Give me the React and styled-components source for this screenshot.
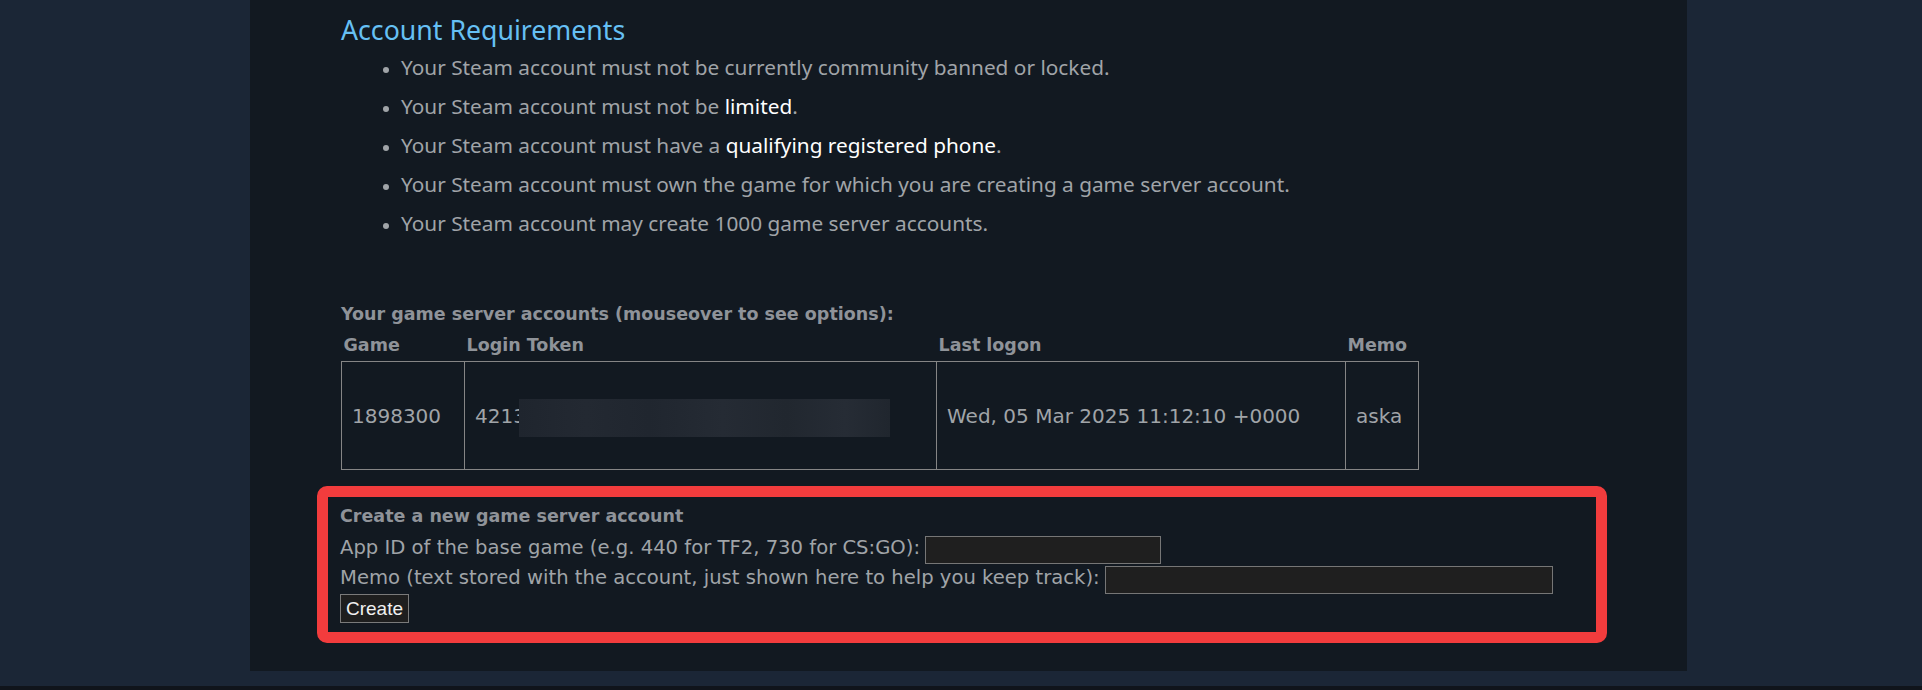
import React from "react";
import styled, { createGlobalStyle } from "styled-components";

const Global = createGlobalStyle`
  html, body { margin: 0; padding: 0; }
  body {
    background: #1b2636;
    font-family: "Noto Sans", "Open Sans", sans-serif;
    overflow: hidden;
  }
`;

const Page = styled.div`
  display: flex;
  flex-direction: column;
  height: 690px;
`;

const Panel = styled.main`
  margin-left: 250px;
  width: 1437px;
  box-sizing: border-box;
  background: #121921;
  padding: 12px 0 28px 91px;
`;

const Heading = styled.h2`
  margin: 0;
  font-size: 26.7px;
  line-height: 36px;
  font-weight: 400;
  color: #66c0f4;
`;

const Requirements = styled.ul`
  margin: 0;
  padding: 0 0 0 60px;
  list-style: disc;
  color: #a0a4a8;
  font-size: 20.8px;
  line-height: 39px;
  li::marker { font-size: 16px; }
`;

const Highlight = styled.span`
  color: #ffffff;
`;

const boldText = `
  font-family: "DejaVu Sans", Verdana, sans-serif;
  font-size: 17.5px;
  font-weight: 700;
  color: #8f9399;
`;

const SectionTitle = styled.div`
  ${boldText}
  margin-top: 56px;
  line-height: 30px;
`;

const Table = styled.table`
  border-collapse: collapse;
  table-layout: fixed;
  width: 1077px;
`;

const Th = styled.th`
  ${boldText}
  text-align: left;
  height: 32px;
  line-height: 30px;
  padding: 0 2px;
  vertical-align: middle;
`;

const Td = styled.td`
  border: 1px solid #858585;
  height: 107px;
  padding: 0 10px;
  font-family: "DejaVu Sans", Verdana, sans-serif;
  font-size: 20px;
  color: #a0a4a8;
  vertical-align: middle;
  white-space: nowrap;
`;

const Token = styled.span`
  display: inline-flex;
  align-items: center;
`;

const Redaction = styled.span`
  display: inline-block;
  width: 371px;
  height: 38px;
  margin-left: -7px;
  margin-top: 4px;
  background: linear-gradient(
    90deg,
    #1f252e 0%,
    #232932 18%,
    #20262f 35%,
    #252b34 55%,
    #21272f 72%,
    #262c35 88%,
    #20262e 100%
  );
`;

const CreateBox = styled.form`
  margin: 16px 0 0 -24px;
  width: 1290px;
  box-sizing: border-box;
  border: 11px solid #f23c3d;
  border-radius: 10px;
  padding: 5px 12px 9px 12px;
  color: #a0a4a8;
  font-family: "DejaVu Sans", Verdana, sans-serif;
  font-size: 19.6px;
`;

const FormTitle = styled.div`
  ${boldText}
  line-height: 28px;
  margin-bottom: 6px;
`;

const FieldRow = styled.label`
  display: flex;
  align-items: center;
  height: 28px;
  margin-bottom: ${(p) => p.$gap || 0}px;
`;

const FieldText = styled.span`
  padding-bottom: 6px;
  white-space: nowrap;
`;

const Input = styled.input`
  box-sizing: border-box;
  width: ${(p) => p.$w}px;
  height: 28px;
  margin: 0 0 0 5px;
  background: #1f1f1f;
  border: 1px solid #767676;
  color: #ddd;
  outline: none;
`;

const Button = styled.button`
  box-sizing: border-box;
  height: 29px;
  padding: 0 5px;
  background: #1e1e1e;
  border: 1px solid #7a7a7a;
  color: #f0f0f0;
  font-family: "Liberation Sans", Arial, sans-serif;
  font-size: 19px;
  line-height: 27px;
  cursor: pointer;
`;

const Footer = styled.footer`
  margin-top: 15px;
  flex: 1;
  background: #10141b;
`;

export default function App() {
  return (
    <Page>
      <Global />
      <Panel>
        <Heading>Account Requirements</Heading>
        <Requirements>
          <li>Your Steam account must not be currently community banned or locked.</li>
          <li>
            Your Steam account must not be <Highlight>limited</Highlight>.
          </li>
          <li>
            Your Steam account must have a <Highlight>qualifying registered phone</Highlight>.
          </li>
          <li>Your Steam account must own the game for which you are creating a game server account.</li>
          <li>Your Steam account may create 1000 game server accounts.</li>
        </Requirements>

        <SectionTitle>Your game server accounts (mouseover to see options):</SectionTitle>
        <Table>
          <colgroup>
            <col style={{ width: 123 }} />
            <col style={{ width: 472 }} />
            <col style={{ width: 409 }} />
            <col style={{ width: 73 }} />
          </colgroup>
          <thead>
            <tr>
              <Th>Game</Th>
              <Th>Login Token</Th>
              <Th>Last logon</Th>
              <Th>Memo</Th>
            </tr>
          </thead>
          <tbody>
            <tr>
              <Td>1898300</Td>
              <Td>
                <Token>
                  4213
                  <Redaction />
                </Token>
              </Td>
              <Td>Wed, 05 Mar 2025 11:12:10 +0000</Td>
              <Td>aska</Td>
            </tr>
          </tbody>
        </Table>

        <CreateBox onSubmit={(e) => e.preventDefault()}>
          <FormTitle>Create a new game server account</FormTitle>
          <FieldRow $gap={2}>
            <FieldText>App ID of the base game (e.g. 440 for TF2, 730 for CS:GO):</FieldText>
            <Input $w={236} />
          </FieldRow>
          <FieldRow>
            <FieldText>Memo (text stored with the account, just shown here to help you keep track):</FieldText>
            <Input $w={448} />
          </FieldRow>
          <Button type="submit">Create</Button>
        </CreateBox>
      </Panel>
      <Footer />
    </Page>
  );
}
